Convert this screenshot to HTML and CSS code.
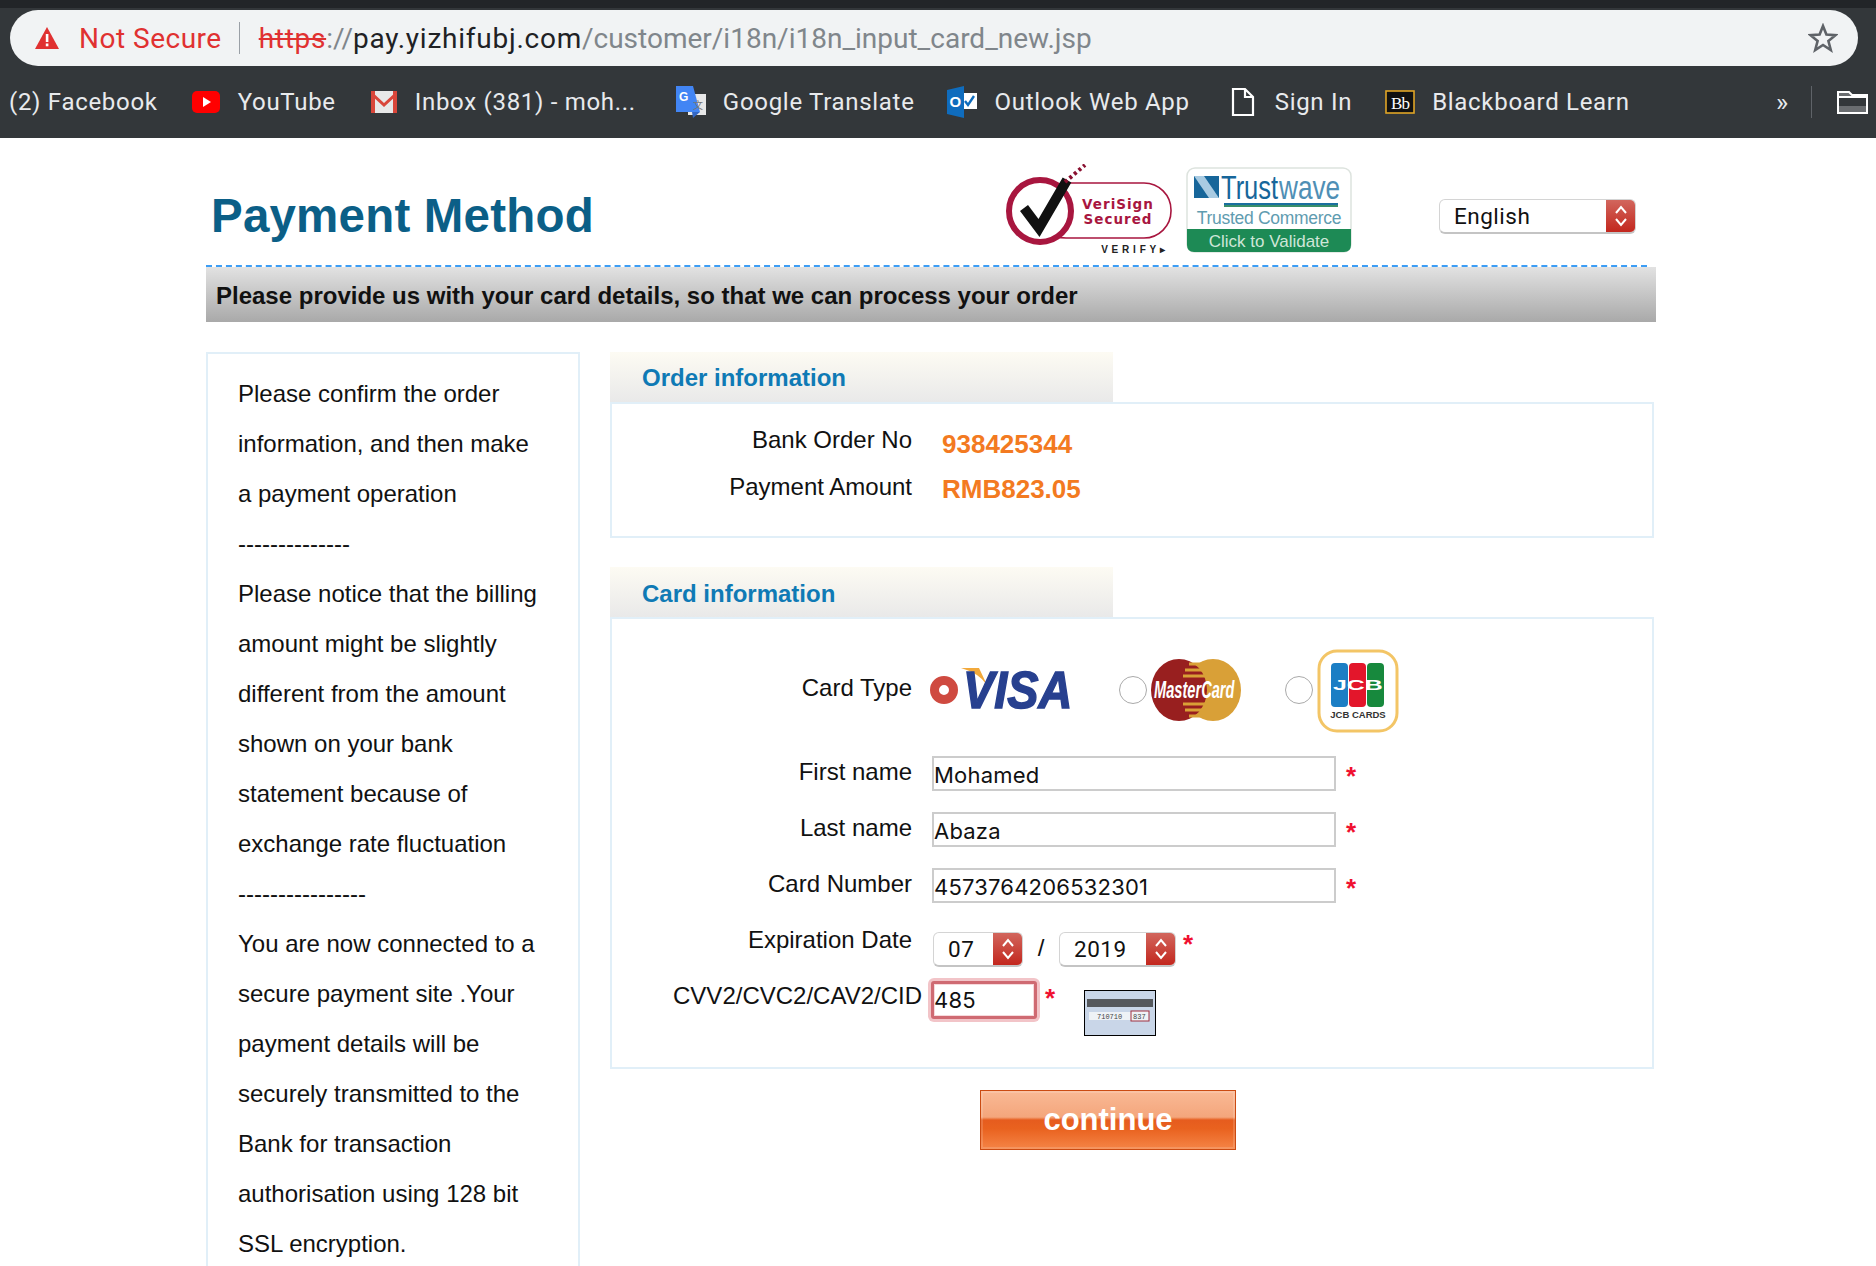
FILE: index.html
```html
<!DOCTYPE html>
<html lang="en">
<head>
  <meta charset="UTF-8">
  <title>Payment Method</title>
  <link rel="stylesheet" href="styles.css">
</head>
<body>

  <div class="browser">
    <div class="urlbar">
      <svg class="warn" width="26" height="24" viewBox="0 0 26 24"><path d="M13 1 L25 23 H1 Z" fill="#e03131"/><rect x="11.8" y="8" width="2.6" height="8" fill="#fff"/><rect x="11.8" y="17.5" width="2.6" height="2.8" fill="#fff"/></svg>
      <span class="notsecure">Not Secure</span>
      <span class="urlsep"></span>
      <span class="url"><span class="https">https</span>://<span class="host">pay.yizhifubj.com</span>/customer/i18n/i18n_input_card_new.jsp</span>
      <svg class="star" width="30" height="30" viewBox="0 0 30 30"><path d="M15 3 L18.4 11.6 L27.5 12.2 L20.4 18 L22.8 27 L15 22 L7.2 27 L9.6 18 L2.5 12.2 L11.6 11.6 Z" fill="none" stroke="#5f6368" stroke-width="2.6"/></svg>
    </div>
    <div class="bookmarks">
      <span class="bm bm-fb">(2) Facebook</span>
      <span class="bm bm-yt">
        <svg width="30" height="24" viewBox="0 0 30 24"><rect x="1" y="1" width="28" height="22" rx="5" fill="#f00"/><path d="M12 7 L20 12 L12 17 Z" fill="#fff"/></svg>
        YouTube</span>
      <span class="bm bm-gm">
        <svg width="28" height="24" viewBox="0 0 28 24"><rect x="1" y="1" width="26" height="22" fill="#e8e8e8"/><path d="M1 1 L14 13 L27 1 V5 L14 17 L1 5 Z" fill="#d9463a"/><rect x="1" y="1" width="4" height="22" fill="#d9463a"/><rect x="23" y="1" width="4" height="22" fill="#d9463a"/></svg>
        Inbox (381) - moh...</span>
      <span class="bm bm-gt">
        <svg width="30" height="32" viewBox="0 0 30 32"><rect x="12" y="8" width="18" height="21" fill="#e8e8e8"/><path d="M0 0 H17 L24 26 H0 Z" fill="#4285f4"/><path d="M16 26 H24 L17 32 Z" fill="#3367c5"/><text x="3" y="15" class="gt-g">G</text><text x="17" y="23" class="gt-z">文</text></svg>
        Google Translate</span>
      <span class="bm bm-ol">
        <svg width="30" height="32" viewBox="0 0 30 32"><rect x="13" y="7" width="17" height="16" fill="#fff"/><path d="M18 15 L21 19 L27 10" stroke="#0f6cbd" stroke-width="2.4" fill="none"/><path d="M0 4 L17 0 V32 L0 28 Z" fill="#0f6cbd"/><text x="2.5" y="21" class="ol-o">O</text></svg>
        Outlook Web App</span>
      <span class="bm bm-si">
        <svg width="24" height="30" viewBox="0 0 24 30"><path d="M2 2 H14 L22 10 V28 H2 Z M14 2 V10 H22" fill="none" stroke="#fff" stroke-width="2.2"/></svg>
        Sign In</span>
      <span class="bm bm-bb">
        <svg width="30" height="24" viewBox="0 0 30 24"><rect x="1" y="1" width="28" height="22" fill="#111" stroke="#e0a526" stroke-width="1.6"/><text x="15" y="18.5" class="bb-t">Bb</text></svg>
        Blackboard Learn</span>
      <span class="more">»</span>
      <span class="bmsep"></span>
      <svg class="folder" width="33" height="26" viewBox="0 0 33 26"><path d="M2 3 H13 L16 6 H31 V24 H2 Z" fill="#6a6d70" stroke="#fff" stroke-width="2"/><path d="M3 8 H30" stroke="#fff" stroke-width="2"/><rect x="3" y="9" width="27" height="8" fill="#33373a"/></svg>
    </div>
  </div>

  <div class="page">
    <div class="head">
      <h1>Payment Method</h1>
      <div class="seals">
        <svg class="verisign" width="168" height="92" viewBox="0 0 168 92">
          <rect x="34" y="19" width="132" height="55" rx="27" fill="#fff" stroke="#a8163f" stroke-width="1.6"/>
          <circle cx="35" cy="47" r="31" fill="#fff" stroke="#a8163f" stroke-width="6"/>
          <path d="M19 44 L34 64 L62 16" fill="none" stroke="#111" stroke-width="10"/>
          <path d="M60 18 L80 1" stroke="#8a1030" stroke-width="4" stroke-dasharray="3 3"/>
          <text x="113" y="45" class="vs-t">VeriSign</text>
          <text x="113" y="60" class="vs-t">Secured</text>
          <text x="130" y="89" class="vs-v">VERIFY▸</text>
        </svg>
        <svg class="trustwave" width="166" height="86" viewBox="0 0 166 86">
          <rect x="1" y="1" width="164" height="84" rx="8" fill="#fff" stroke="#dde3de" stroke-width="1.5"/>
          <path d="M1 62 H165 V78 Q165 85 158 85 H8 Q1 85 1 78 Z" fill="#1d8a55"/>
          <rect x="8" y="9" width="25" height="22" fill="#17669a"/>
          <path d="M8 9 H18 L33 31 H23 Z" fill="#a9cbe2"/>
          <text transform="translate(35 32) scale(.75 1)" class="tw-a">Trust</text>
          <text transform="translate(93 32) scale(.77 1)" class="tw-a tw-b">wave</text>
          <rect x="38" y="36" width="114" height="2" fill="#1b6f9f"/>
          <rect x="38" y="38" width="114" height="2" fill="#3a8f6a"/>
          <text x="83" y="57" class="tw-c">Trusted Commerce</text>
          <text x="83" y="80" class="tw-d">Click to Validate</text>
        </svg>
      </div>
      <div class="sel sel-lang"><span>English</span><b class="arrows"><svg width="14" height="26" viewBox="0 0 14 26"><path d="M2 10 L7 4 L12 10 M2 16 L7 22 L12 16" fill="none" stroke="#fff" stroke-width="2"/></svg></b></div>
    </div>
    <div class="banner">Please provide us with your card details, so that we can process your order</div>

    <div class="columns">
      <div class="notes">
        <p>Please confirm the order</p>
        <p>information, and then make</p>
        <p>a payment operation</p>
        <p>--------------</p>
        <p>Please notice that the billing</p>
        <p>amount might be slightly</p>
        <p>different from the amount</p>
        <p>shown on your bank</p>
        <p>statement because of</p>
        <p>exchange rate fluctuation</p>
        <p>----------------</p>
        <p>You are now connected to a</p>
        <p>secure payment site .Your</p>
        <p>payment details will be</p>
        <p>securely transmitted to the</p>
        <p>Bank for transaction</p>
        <p>authorisation using 128 bit</p>
        <p>SSL encryption.</p>
      </div>

      <div class="main">
        <div class="tab">Order information</div>
        <div class="box box-order">
          <div class="row row-order"><label>Bank Order No</label><span class="val">938425344</span></div>
          <div class="row row-order"><label>Payment Amount</label><span class="val val-amt">RMB823.05</span></div>
        </div>

        <div class="tab tab-card">Card information</div>
        <div class="box box-card">
          <div class="row row-type">
            <label>Card Type</label>
            <span class="radio radio-on"></span>
            <svg class="visa" width="128" height="66" viewBox="0 0 128 66">
              <path d="M0 11 H18 L26 28 Q18 16 0 11 Z" fill="#f2a93b"/>
              <text transform="translate(2 51) scale(.9 1)" class="visa-t">VISA</text>
            </svg>
            <span class="radio radio-mc"></span>
            <svg class="mc" width="90" height="64" viewBox="0 0 90 64">
              <ellipse cx="62" cy="32" rx="28" ry="31" fill="#d9a037"/>
              <ellipse cx="28" cy="32" rx="28" ry="31" fill="#981f1f"/>
              <path d="M38 6 H52 M34 12 H56 M32 18 H58 M32 46 H58 M34 52 H56 M38 58 H52" stroke="#d9a037" stroke-width="3"/>
              <text transform="translate(3 40) scale(.61 1)" class="mc-t">MasterCard</text>
            </svg>
            <span class="radio radio-jcb"></span>
            <svg class="jcb" width="82" height="84" viewBox="0 0 82 84">
              <rect x="2" y="2" width="78" height="80" rx="18" fill="#fff" stroke="#f3c566" stroke-width="3"/>
              <rect x="14" y="14" width="17" height="44" rx="4" fill="#1b7ec4"/>
              <rect x="32" y="14" width="17" height="44" rx="4" fill="#e3162b"/>
              <rect x="50" y="14" width="17" height="44" rx="4" fill="#17893d"/>
              <text transform="translate(16 41) scale(1.66 1)" class="jcb-a">JCB</text>
              <text x="41" y="69" class="jcb-b">JCB CARDS</text>
            </svg>
          </div>
          <div class="row row-input"><label>First name</label><div class="input">Mohamed</div><span class="req">*</span></div>
          <div class="row row-input"><label>Last name</label><div class="input">Abaza</div><span class="req">*</span></div>
          <div class="row row-input"><label>Card Number</label><div class="input">4573764206532301</div><span class="req">*</span></div>
          <div class="row row-exp">
            <label>Expiration Date</label>
            <div class="sel sel-month"><span>07</span><b class="arrows"><svg width="14" height="26" viewBox="0 0 14 26"><path d="M2 10 L7 4 L12 10 M2 16 L7 22 L12 16" fill="none" stroke="#fff" stroke-width="2"/></svg></b></div>
            <span class="slash">/</span>
            <div class="sel sel-year"><span>2019</span><b class="arrows"><svg width="14" height="26" viewBox="0 0 14 26"><path d="M2 10 L7 4 L12 10 M2 16 L7 22 L12 16" fill="none" stroke="#fff" stroke-width="2"/></svg></b></div>
            <span class="req">*</span>
          </div>
          <div class="row row-cvv">
            <label>CVV2/CVC2/CAV2/CID</label>
            <div class="input input-cvv">485</div>
            <span class="req">*</span>
            <svg class="cvvpic" width="72" height="46" viewBox="0 0 72 46">
              <rect x="0.5" y="0.5" width="71" height="45" fill="#c9d6e8" stroke="#000"/>
              <rect x="3" y="9" width="66" height="8" fill="#55585c"/>
              <rect x="5" y="22" width="58" height="8" fill="#eef2f6"/>
              <text x="13" y="29" class="cvv-t">710710</text>
              <rect x="47" y="21" width="18" height="10" fill="#eef2f6" stroke="#a03040"/>
              <text x="49" y="29" class="cvv-t">837</text>
            </svg>
          </div>
        </div>

        <div class="actions"><button class="continue">continue</button></div>
      </div>
    </div>
  </div>

</body>
</html>
```

FILE: styles.css
```css
html, body {
  margin: 0;
  padding: 0;
  height: 1266px;
  overflow: hidden;
  background: #fff;
  font-family: "Liberation Sans", Arial, sans-serif;
  color: #111;
}

/* browser chrome */
.browser {
  height: 138px;
  background: #33373a;
  border-top: 8px solid #222528;
  box-sizing: border-box;
  font-family: Roboto, "Liberation Sans", sans-serif;
}

.urlbar {
  margin: 2px 18px 0 10px;
  height: 56px;
  background: #f1f3f4;
  border-radius: 28px;
  display: flex;
  align-items: center;
  font-size: 28px;
  letter-spacing: 0.5px;
  padding-left: 24px;
  padding-right: 20px;
}

.notsecure {
  color: #e03131;
  margin-left: 19px;
}

.urlsep {
  width: 1px;
  height: 32px;
  background: #9aa0a6;
  margin: 0 19px 0 17px;
}

.url {
  color: #80868b;
  flex: 1;
  white-space: nowrap;
  letter-spacing: 0;
}

.https {
  color: #e03131;
  text-decoration: line-through;
  letter-spacing: 0.7px;
}

.host {
  color: #202124;
  letter-spacing: 0.75px;
}

.bookmarks {
  display: flex;
  align-items: center;
  height: 72px;
  padding-left: 9px;
  color: #e8eaed;
  font-size: 24px;
  letter-spacing: 0.7px;
  white-space: nowrap;
}

.bm {
  display: flex;
  align-items: center;
  gap: 17px;
  margin-right: 34px;
}

.bm-fb { margin-right: 33px; }
.bm-gm { margin-right: 40px; }
.bm-gt { margin-right: 32px; }
.bm-ol { margin-right: 41px; gap: 18px; }
.bm-si { margin-right: 33px; gap: 20px; }
.bm-bb { margin-right: 0; }

.more {
  margin-left: auto;
  font-size: 26px;
  margin-right: 22px;
}

.bmsep {
  width: 1px;
  height: 32px;
  background: #5f6368;
  margin-right: 24px;
}

.folder {
  margin-right: 7px;
}

.gt-g { font: bold 12px "Liberation Sans", sans-serif; fill: #fff; }
.gt-z { font: 10px "Noto Sans CJK SC", sans-serif; fill: #777; }
.ol-o { font: bold 15px "Liberation Sans", sans-serif; fill: #fff; }
.bb-t { font: 17px "Liberation Serif", serif; fill: #fff; text-anchor: middle; letter-spacing: -1px; }

/* page */
.page {
  margin-left: 206px;
  width: 1450px;
}

.head {
  display: flex;
  align-items: flex-start;
  height: 129px;
  border-bottom: 2px dashed #3c9df5;
  margin-right: 9px;
  box-sizing: border-box;
}

h1 {
  margin: 50px 0 0 5px;
  font-size: 47.5px;
  line-height: 55px;
  font-weight: bold;
  color: #0b5f87;
  letter-spacing: 0.2px;
  width: 794px;
  white-space: nowrap;
}

.seals {
  display: flex;
  align-items: flex-start;
  gap: 13px;
  width: 434px;
  margin-top: 26px;
}

.trustwave {
  margin-top: 3px;
}

.vs-t { font: bold 13.5px "DejaVu Sans", sans-serif; fill: #a8163f; text-anchor: middle; letter-spacing: 1px; }
.vs-v { font: bold 10px "Liberation Sans", sans-serif; fill: #222; text-anchor: middle; letter-spacing: 3.8px; }
.tw-a { font: 34px "Liberation Sans", sans-serif; fill: #17669a; }
.tw-b { fill: #4f8fb5; }
.tw-c { font: 17.5px "Liberation Sans", sans-serif; fill: #5f9cb0; text-anchor: middle; letter-spacing: -0.3px; }
.tw-d { font: 17px "Liberation Sans", sans-serif; fill: #cfe6d8; text-anchor: middle; }

.sel {
  display: flex;
  align-items: center;
  justify-content: space-between;
  box-sizing: border-box;
  height: 35px;
  background: #fff;
  border: 1px solid #d4d4d4;
  border-bottom: 2px solid #c4c4c4;
  border-radius: 6px;
  font-size: 22.5px;
  font-family: Roboto, "Liberation Sans", sans-serif;
  letter-spacing: 0.5px;
  overflow: hidden;
}

.sel span {
  padding-left: 14px;
}

.arrows {
  width: 29px;
  height: 35px;
  background: linear-gradient(#d2685f, #c2231a);
  display: flex;
  align-items: center;
  justify-content: center;
}

.sel-lang {
  width: 197px;
  margin-top: 61px;
}

.banner {
  height: 55px;
  line-height: 58px;
  padding-left: 10px;
  font-size: 24px;
  font-weight: bold;
  background: linear-gradient(#e2e2e2, #a9a9a9);
  color: #111;
}

.columns {
  display: flex;
  margin-top: 30px;
  align-items: flex-start;
}

.notes {
  width: 374px;
  box-sizing: border-box;
  border: 2px solid #e1eff8;
  padding: 15px 0 0 30px;
  font-size: 24px;
  line-height: 50px;
  height: 1000px;
}

.notes p {
  margin: 0;
  white-space: nowrap;
}

.main {
  margin-left: 30px;
  width: 1044px;
}

.tab {
  width: 503px;
  height: 50px;
  box-sizing: border-box;
  padding-left: 32px;
  line-height: 52px;
  font-size: 24px;
  font-weight: bold;
  color: #0f7ab5;
  background: linear-gradient(#fdfbf3, #e9e9e9);
}

.tab-card {
  margin-top: 29px;
  line-height: 53px;
}

.box {
  border: 2px solid #e1eff8;
  box-sizing: border-box;
}

.box-order {
  height: 136px;
  padding-top: 12px;
}

.box-card {
  height: 452px;
  padding-top: 29px;
}

.row {
  display: flex;
  align-items: center;
  font-size: 24px;
}

.row label {
  width: 300px;
  text-align: right;
  white-space: nowrap;
}

.row-order {
  height: 47px;
}

.val {
  margin-left: 30px;
  color: #f37a21;
  font-size: 26px;
  font-weight: bold;
  position: relative;
  top: 5px;
}

.val-amt {
  top: 3px;
}

.row-type {
  height: 84px;
}

.row-type label {
  position: relative;
  top: -2px;
}

.radio {
  width: 28px;
  height: 28px;
  box-sizing: border-box;
  border-radius: 50%;
  border: 1px solid #aaa;
  background: #fff;
  flex: none;
}

.radio-on {
  margin-left: 18px;
  border: 9px solid #cf4a40;
}

.visa {
  margin-left: 3px;
}

.radio-mc {
  margin-left: 30px;
}

.mc {
  margin-left: 4px;
}

.radio-jcb {
  margin-left: 44px;
}

.jcb {
  margin-left: 4px;
  position: relative;
  top: 1px;
}

.visa-t { font: italic bold 52px "Liberation Sans", sans-serif; fill: #27408f; stroke: #27408f; stroke-width: 1.5px; }
.mc-t { font: italic bold 24px "Liberation Sans", sans-serif; fill: #fff; }
.jcb-a { font: bold 15px "Liberation Sans", sans-serif; fill: #fff; }
.jcb-b { font: bold 9.5px "Liberation Sans", sans-serif; fill: #333; text-anchor: middle; }
.cvv-t { font: 7px "Liberation Mono", monospace; fill: #444; }

.row-input {
  height: 56px;
}

.row-input:nth-child(2) {
  margin-top: 13px;
}

.row-input label {
  position: relative;
  top: -1px;
}

.input {
  margin-left: 20px;
  width: 404px;
  height: 35px;
  box-sizing: border-box;
  border: 2px solid #ccc;
  line-height: 35px;
  padding-left: 0;
  font-family: Inter, "Liberation Sans", sans-serif;
  font-size: 22px;
  letter-spacing: 0.2px;
  background: #fff;
}

.req {
  color: #f01030;
  font-size: 26px;
  font-weight: bold;
  margin-left: 10px;
  position: relative;
  top: 3px;
}

.row-exp {
  height: 63px;
  margin-top: -3px;
}

.row-exp label {
  position: relative;
  top: -2px;
}

.sel-month {
  width: 90px;
  margin-left: 21px;
  margin-top: 16px;
}

.sel-year {
  width: 117px;
  margin-top: 16px;
}

.slash {
  width: 36px;
  text-align: center;
  position: relative;
  top: 6px;
}

.row-exp .req {
  margin-left: 7px;
  top: 3px;
}

.row-cvv {
  height: 46px;
}

.row-cvv label {
  width: 310px;
}

.input-cvv {
  width: 106px;
  height: 38px;
  margin-left: 9px;
  margin-top: 7px;
  border: 3px solid #cf6a72;
  box-shadow: 0 0 0 3px #f2c4c8, inset 0 0 0 1px #f7d9dc;
  line-height: 32px;
  border-radius: 3px;
}

.row-cvv .req {
  margin-left: 8px;
  top: 2px;
}

.cvvpic {
  margin-left: 29px;
  margin-top: 34px;
}

.actions {
  margin-top: 21px;
  padding-left: 370px;
}

.continue {
  width: 256px;
  height: 60px;
  border: 1px solid #cb4b12;
  padding: 0;
  font-family: "Liberation Sans", Arial, sans-serif;
  font-size: 31px;
  font-weight: bold;
  color: #fff;
  background: linear-gradient(#f9b995 0, #f4a67c 45%, #e65c1e 50%, #e9621f 65%, #f58446 100%);
  box-shadow: inset 0 0 0 2px rgba(255, 255, 255, 0.15);
}
```
